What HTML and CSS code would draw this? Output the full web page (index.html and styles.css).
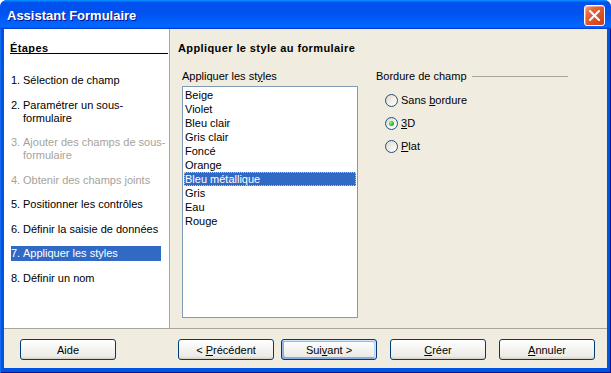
FILE: index.html
```html
<!DOCTYPE html>
<html lang="fr">
<head>
<meta charset="utf-8">
<title>Assistant Formulaire</title>
<link rel="stylesheet" href="styles.css">
</head>
<body>
<div class="window">
  <div class="titlebar">
    <span class="title">Assistant Formulaire</span>
    <button class="close" aria-label="Fermer">
      <svg width="11" height="11" viewBox="0 0 11 11"><path d="M1 1 L10 10 M10 1 L1 10" stroke="#fff" stroke-width="2" stroke-linecap="square"/></svg>
    </button>
  </div>
  <div class="frame">
    <div class="client">
      <div class="main">
        <nav class="steps">
          <div class="steps-title">Étapes</div>
          <ol class="step-list">
            <li class="step"><span class="num">1.</span><span>Sélection de champ</span></li>
            <li class="step"><span class="num">2.</span><span>Paramétrer un sous-<br>formulaire</span></li>
            <li class="step disabled"><span class="num">3.</span><span>Ajouter des champs de sous-<br>formulaire</span></li>
            <li class="step disabled"><span class="num">4.</span><span>Obtenir des champs joints</span></li>
            <li class="step"><span class="num">5.</span><span>Positionner les contrôles</span></li>
            <li class="step"><span class="num">6.</span><span>Définir la saisie de données</span></li>
            <li class="step active"><span class="num">7.</span><span>Appliquer les styles</span></li>
            <li class="step"><span class="num">8.</span><span>Définir un nom</span></li>
          </ol>
        </nav>
        <section class="content">
          <h1 class="heading">Appliquer le style au formulaire</h1>
          <div class="columns">
            <div class="styles-col">
              <div class="label">Appliquer les st<u>y</u>les</div>
              <ul class="listbox">
                <li>Beige</li>
                <li>Violet</li>
                <li>Bleu clair</li>
                <li>Gris clair</li>
                <li>Foncé</li>
                <li>Orange</li>
                <li class="selected">Bleu métallique</li>
                <li>Gris</li>
                <li>Eau</li>
                <li>Rouge</li>
              </ul>
            </div>
            <div class="border-col">
              <div class="group-title"><span>Bordure de champ</span><span class="rule"></span></div>
              <div class="radio-list">
                <div class="radio"><span class="radio-circle"></span><span>Sans <u>b</u>ordure</span></div>
                <div class="radio"><span class="radio-circle checked"></span><span><u>3</u>D</span></div>
                <div class="radio"><span class="radio-circle"></span><span><u>P</u>lat</span></div>
              </div>
            </div>
          </div>
        </section>
      </div>
      <div class="footer">
        <button class="btn">Aide</button>
        <div class="spacer"></div>
        <button class="btn">&lt; <u>P</u>récédent</button>
        <button class="btn default nav-next">Sui<u>v</u>ant &gt;</button>
        <button class="btn wide-gap"><u>C</u>réer</button>
        <button class="btn wide-gap"><u>A</u>nnuler</button>
      </div>
    </div>
  </div>
</div>
</body>
</html>
```

FILE: styles.css
```css
* { box-sizing: border-box; }

html, body {
  margin: 0;
  padding: 0;
  background: #ffffff;
}

body {
  width: 611px;
  height: 373px;
  overflow: hidden;
  font-family: "Liberation Sans", Arial, sans-serif;
  font-size: 11px;
  color: #000;
}

.window {
  width: 611px;
  height: 373px;
  display: flex;
  flex-direction: column;
  border-radius: 7px 7px 0 0;
  overflow: hidden;
  background: #0054E3;
}

.titlebar {
  height: 29px;
  flex-shrink: 0;
  display: flex;
  align-items: center;
  justify-content: space-between;
  padding: 2px 6px 0 7px;
  background: linear-gradient(180deg, #0997ff, #0053ee 8%, #0050ee 40%, #0066ff 88%, #0066ff 93%, #005bff 95%, #003dd7 96%, #003dd7);
}

.title {
  color: #fff;
  font-weight: bold;
  font-size: 13px;
  text-shadow: 1px 1px #0f1089;
}

.close {
  width: 21px;
  height: 21px;
  margin: 0;
  padding: 0;
  border: 1px solid #fff;
  border-radius: 3px;
  display: flex;
  align-items: center;
  justify-content: center;
  background: linear-gradient(135deg, #f4a283 0%, #e8633a 30%, #dc4f25 65%, #c8401a 100%);
  box-shadow: inset 1px 1px rgba(255, 255, 255, 0.35);
}

.frame {
  flex: 1;
  display: flex;
  padding: 0 4px 5px 4px;
  background: #0054E3;
  box-shadow: inset 1px 0 #166aee, inset -1px -1px #00138c;
}

.client {
  flex: 1;
  display: flex;
  flex-direction: column;
  background: #f0ece0;
}

.main {
  height: 299px;
  display: flex;
}

.steps {
  width: 166px;
  background: #fff;
  border-right: 1px solid #aca899;
}

.steps-title {
  margin: 14px 0 0 6px;
  width: 158px;
  height: 11px;
  line-height: 10px;
  font-weight: bold;
  letter-spacing: 0.4px;
  border-bottom: 1px solid #000;
}

.step-list {
  list-style: none;
  margin: 19px 0 0 7px;
  padding: 0;
  display: flex;
  flex-direction: column;
  gap: 9.5px;
}

.step {
  width: 150px;
  padding: 1px 0;
  line-height: 13px;
  display: flex;
  white-space: nowrap;
}

.num {
  width: 12px;
  flex-shrink: 0;
}

.step.disabled { color: #a6a39a; }

.step.active {
  background: #316ac5;
  color: #fff;
}

.content {
  flex: 1;
  padding: 13px 0 0 8px;
}

.heading {
  margin: 0;
  font-size: 11px;
  font-weight: bold;
  letter-spacing: 0.4px;
  line-height: 13px;
}

.columns {
  display: flex;
  margin-top: 15px;
  padding-left: 4px;
}

.styles-col { width: 176px; }

.label {
  line-height: 13px;
  margin-bottom: 3px;
}

.listbox {
  list-style: none;
  margin: 0;
  padding: 1px;
  height: 232px;
  background: #fff;
  border: 1px solid #7f9db9;
}

.listbox li {
  line-height: 14px;
  height: 14px;
  padding-left: 1px;
  white-space: nowrap;
}

.listbox li.selected {
  background: #316ac5;
  color: #fff;
  outline: 1px dotted #f2c36b;
  outline-offset: -1px;
}

.border-col {
  width: 192px;
  margin-left: 18px;
}

.group-title {
  display: flex;
  align-items: center;
  line-height: 13px;
}

.rule {
  flex: 1;
  height: 1px;
  margin-left: 5px;
  background: #aca899;
}

.radio-list {
  margin: 11px 0 0 9px;
  display: flex;
  flex-direction: column;
  gap: 10px;
}

.radio {
  display: flex;
  align-items: center;
  gap: 3px;
  line-height: 13px;
  height: 13px;
}

.radio-circle {
  width: 13px;
  height: 13px;
  flex-shrink: 0;
  border-radius: 50%;
  border: 1px solid #1c5180;
  background: linear-gradient(135deg, #dcd7cb 0%, #f3f1ea 55%, #ffffff 100%);
  display: flex;
  align-items: center;
  justify-content: center;
}

.radio-circle.checked::after {
  content: "";
  width: 5px;
  height: 5px;
  border-radius: 50%;
  background: radial-gradient(circle at 35% 35%, #8ef58e 0%, #3ac23a 45%, #1d8f1d 100%);
}

.footer {
  flex: 1;
  display: flex;
  align-items: flex-start;
  padding: 10px 12px 0 16px;
  border-top: 1px solid #aca899;
}

.spacer { flex: 1; }

.btn {
  width: 96px;
  height: 21px;
  margin: 0;
  padding: 0;
  font-family: "Liberation Sans", Arial, sans-serif;
  font-size: 11px;
  color: #000;
  border: 1px solid #003c74;
  border-radius: 3px;
  background: linear-gradient(180deg, #fff, #ecebe6 86%, #d6d0c5);
}

.btn.default {
  box-shadow: inset -1px 1px #cee7ff, inset 1px 2px #98b8ea, inset -2px 2px #bcd4f6, inset 1px -1px #89ade4, inset 2px -2px #89ade4;
}

.nav-next { margin-left: 7px; }
.wide-gap { margin-left: 13px; }
```
